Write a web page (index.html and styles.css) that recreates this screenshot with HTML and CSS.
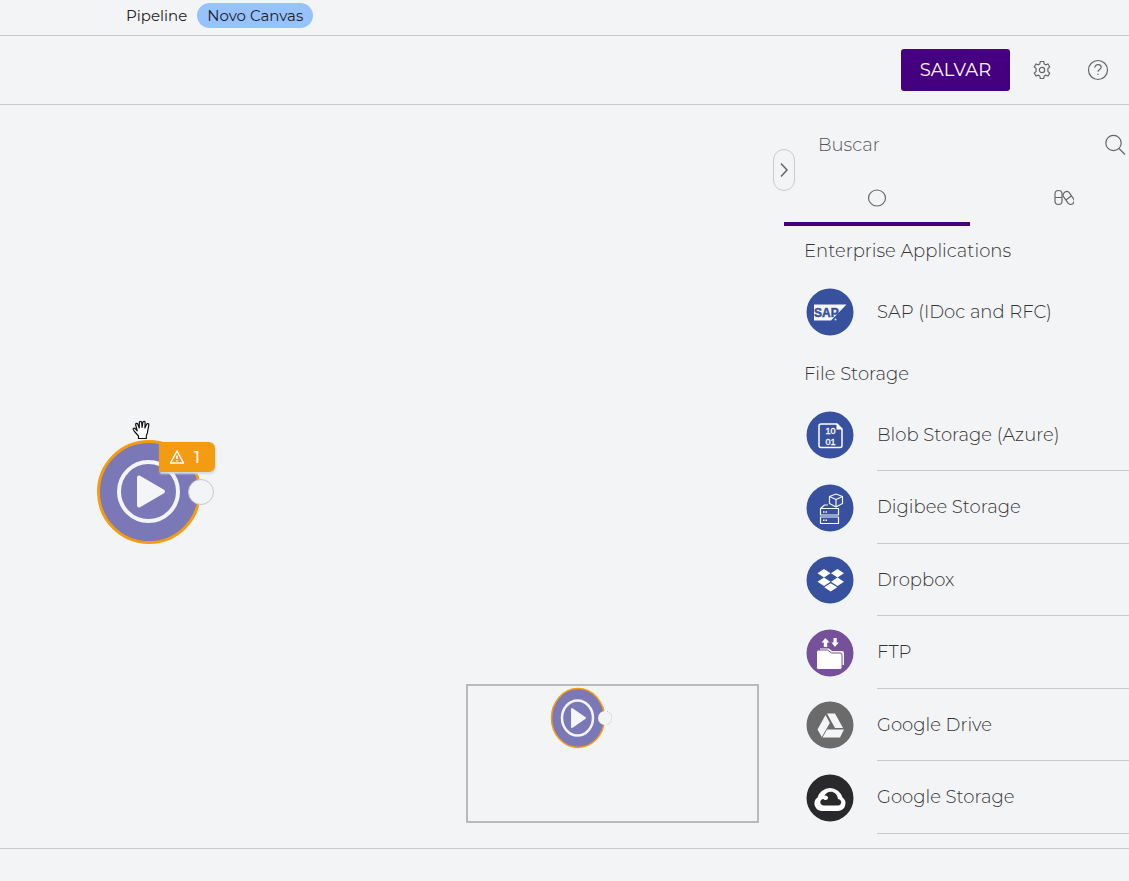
FILE: index.html
```html
<!DOCTYPE html>
<html lang="pt-BR">
<head>
<meta charset="utf-8">
<meta name="viewport" content="width=device-width, initial-scale=1">
<title>Pipeline</title>
<link rel="stylesheet" href="styles.css">
</head>
<body>
<header class="crumbs">
  <span>Pipeline</span>
  <span class="tag">Novo Canvas</span>
</header>

<div class="toolbar">
  <button class="save" type="button">SALVAR</button>
  <button class="icon-button" type="button" aria-label="Configurações">
    <svg width="20" height="20" viewBox="0 0 20 20" class="line"><path d="M8.300 1.500h3.400l.5 2.400 1.500.9 2.300-.8 1.700 2.900-1.800 1.600v3l1.800 1.600-1.700 2.900-2.300-.8-1.500.9-.5 2.400H8.300l-.5-2.400-1.500-.9-2.300.8-1.700-2.900 1.800-1.600v-3L2.300 6.900 4 4l2.300.8 1.500-.9z"/><circle cx="10" cy="10" r="2.700"/></svg>
  </button>
  <button class="icon-button" type="button" aria-label="Ajuda">
    <svg width="22" height="22" viewBox="0 0 22 22" class="line"><circle cx="11" cy="11" r="9.500"/><path d="M7.800 8.700c0-1.900 1.400-3 3.200-3s3.200 1 3.200 2.600c0 2.200-3.200 2.200-3.200 4.500M11 14.700v1.300"/></svg>
  </button>
</div>

<main class="workspace">
  <section class="canvas" aria-label="Canvas">
    <div class="node">
      <svg width="118" height="106" viewBox="0 0 118 106">
        <circle cx="53" cy="53" r="50.500" fill="#7b78b7" stroke="#f39c12" stroke-width="3"/>
        <circle cx="52.500" cy="52.500" r="29.500" fill="none" stroke="#f3f5f8" stroke-width="4"/>
        <path d="M43 38.500v28l24-14z" fill="#f3f5f8" stroke="#f3f5f8" stroke-width="4" stroke-linejoin="round"/>
        <circle cx="105" cy="53" r="12.500" fill="#f3f4f6" stroke="#c6c7c9"/>
      </svg>
      <span class="warning">
        <svg width="16" height="14" viewBox="0 0 16 14" fill="none" stroke="#fff" stroke-width="1.500" stroke-linejoin="round"><path d="M8 1l6.500 12h-13zM8 5.500v3.500M8 10.200v1.300"/></svg>
        <span>1</span>
      </span>
    </div>
    <svg class="hand" width="20" height="20" viewBox="0 0 20 20"><path d="M6.500 18.500v-2.500L2.500 11.500 1.200 9.500c-.4-1.200 1-1.700 2-.8l2 2.100L3.700 5c-.5-1.900 1.500-2.300 2.100-.7L7.300 8V2.500C7.300.9 9.500.9 9.600 2.500l.5 5 .7-5.100c.3-1.600 2.400-1.300 2.300.3L12.900 8l1.700-3.700c.7-1.400 2.500-.6 2.200.8l-1.200 6.600c-.1 1.900-1 2.300-1.300 4.300v2.500z" fill="#fff" stroke="#111" stroke-width="1.200" stroke-linejoin="round"/></svg>
    <div class="minimap">
      <svg width="62" height="62" viewBox="0 0 62 62">
        <ellipse cx="28" cy="31" rx="26.500" ry="29.500" fill="#7b78b7" stroke="#f39c12" stroke-width="1.500"/>
        <ellipse cx="27.500" cy="31" rx="15.500" ry="17.500" fill="none" stroke="#f3f5f8" stroke-width="2.500"/>
        <path d="M22 22v18l13-9z" fill="#f3f5f8" stroke="#f3f5f8" stroke-width="2" stroke-linejoin="round"/>
        <circle cx="55" cy="31" r="7" fill="#f3f4f6"/>
        <path d="M57 24.300a7 7 0 0 1 0 13.400" fill="none" stroke="#b8babc" stroke-dasharray="1 1"/>
      </svg>
    </div>
  </section>

  <aside class="sidebar">
    <button class="collapse" type="button" aria-label="Recolher painel">
      <svg width="10" height="16" viewBox="0 0 10 16" fill="none" stroke="#666" stroke-width="1.500"><path d="M2 1.500L8 8l-6 6.500"/></svg>
    </button>
    <div class="panel">
      <div class="search">
        <input type="text" placeholder="Buscar" aria-label="Buscar">
        <button class="icon-button" type="button" aria-label="Pesquisar">
          <svg width="22" height="22" viewBox="0 0 22 22" class="line"><circle cx="9.500" cy="9" r="7.700"/><path d="M15 14.500l6 6"/></svg>
        </button>
      </div>
      <div class="tabs">
        <button class="tab active" type="button" aria-label="Componentes"><svg width="22" height="18" viewBox="0 0 22 18" class="line"><ellipse cx="11" cy="9" rx="8.500" ry="8"/></svg></button>
        <button class="tab" type="button" aria-label="Cápsulas"><svg width="22" height="18" viewBox="0 0 22 18" class="line"><rect x="3" y="1.500" width="7" height="14" rx="3.500"/><path d="M3 8.500h7M13.800 11l5.500-4"/><rect x="13.200" y="2" width="7" height="14" rx="3.500" transform="rotate(-35 16.700 9)"/></svg></button>
      </div>

      <h2>Enterprise Applications</h2>
      <ul class="items single">
        <li>
          <svg class="logo" viewBox="0 0 48 48"><circle cx="24" cy="24" r="23.500" fill="#37519f"/><path d="M8 16.500h32.500L25 32.500H8z" fill="#f6f8fc"/><text class="sap" x="8" y="29">SAP</text><circle cx="29.500" cy="31.500" r="1" fill="#dfe5f4"/></svg>
          <span>SAP (IDoc and RFC)</span>
        </li>
      </ul>

      <h2>File Storage</h2>
      <ul class="items">
        <li>
          <svg class="logo" viewBox="0 0 48 48"><circle cx="24" cy="24" r="23.500" fill="#37519f"/><path d="M31 13H15a2 2 0 0 0-2 2v19.500a2 2 0 0 0 2 2h19a2 2 0 0 0 2-2V18z" fill="none" stroke="#fff" stroke-width="1.500"/><path d="M30.500 12.500l6 6h-6z" fill="#fff"/><text class="bits" x="19.500" y="23">10</text><text class="bits" x="19.500" y="33.500">01</text></svg>
          <span>Blob Storage (Azure)</span>
        </li>
        <li>
          <svg class="logo" viewBox="0 0 48 48"><circle cx="24" cy="24" r="23.500" fill="#37519f"/><g fill="none" stroke="#f4f6fb" stroke-width="1.200" stroke-linejoin="round"><path d="M30 10l6.500 2.500v7L30 23l-6.500-3.500v-7zM23.500 12.500L30 15.500l6.500-3M30 15.500V23M14.500 24.500h18v6.500h-18zM14.500 33h18v6.500h-18zM14.500 24.500l4-3.500h3.500"/><path d="M17 28h4.500M17 36.300h4.500" stroke-width="1.500" stroke-dasharray="1.500 1"/></g></svg>
          <span>Digibee Storage</span>
        </li>
        <li>
          <svg class="logo" viewBox="0 0 48 48"><circle cx="24" cy="24" r="23.500" fill="#37519f"/><path d="M18 13l6.500 4.200-6.500 4.200-6.500-4.200zM31.500 13l6.500 4.200-6.500 4.200-6.500-4.200zM18 21.500l6.500 4.200-6.500 4.200-6.500-4.200zM31.500 21.500l6.500 4.200-6.500 4.200-6.500-4.200zM24.700 27.200l6.500 4.100-6.500 4.200-6.500-4.200z" fill="#fff"/></svg>
          <span>Dropbox</span>
        </li>
        <li>
          <svg class="logo" viewBox="0 0 48 48"><circle cx="24" cy="24" r="23.500" fill="#75509b"/><path d="M14 22v-2.500h9l3 2.500h10a2 2 0 0 1 2 2v12h-2" fill="#f7f4fa"/><path d="M10.500 23a2 2 0 0 1 2-2h9l4 3h8.500a2 2 0 0 1 2 2v12.500a2 2 0 0 1-2 2H12.500a2 2 0 0 1-2-2z" fill="#fff" stroke="#75509b"/><path d="M19.500 9l4 4.500h-2.300V18h-3.400v-4.500h-2.300zM29 18l-3.500-4.500h2V9h3.200v4.500h2z" fill="#fff"/></svg>
          <span>FTP</span>
        </li>
        <li>
          <svg class="logo" viewBox="0 0 48 48"><circle cx="24" cy="24" r="23.500" fill="#6b6b6b"/><path d="M21 12.500h8l8 14.500h-8zM19.500 14l4.300 8-8 14-4.300-7.500zM21 28.500h17L34 36.500H16.500z" fill="#f4f5f6"/></svg>
          <span>Google Drive</span>
        </li>
        <li>
          <svg class="logo" viewBox="0 0 48 48"><circle cx="24" cy="24" r="23.500" fill="#29292b"/><path d="M16.500 37a7.500 7.500 0 0 1-5-13.500A13 13 0 0 1 36.500 23.500a7.500 7.500 0 0 1-4.500 13.500z" fill="#fff"/><path d="M17.500 31.500c-4.500-.5-4-6.500 0-6.500.8 1.300 4.200 1.800 4.500-.9.200-1.900-1.500-2.900-3.500-2.600 3-6 12.500-5 13.500 3.500 4.500.5 4 6.500 0 6.500z" fill="#29292b"/></svg>
          <span>Google Storage</span>
        </li>
      </ul>
    </div>
  </aside>
</main>
<footer class="status"></footer>
</body>
</html>
```

FILE: styles.css
```css
* { box-sizing: border-box; }

body {
  margin: 0;
  min-height: 100vh;
  display: flex;
  flex-direction: column;
  background: #f3f4f6;
  color: #333;
  font-family: Montserrat, Inter, "Open Sans", sans-serif;
  font-size: 18px;
  font-weight: 300;
}

button {
  padding: 0;
  border: 0;
  background: none;
  font: inherit;
  cursor: pointer;
}

svg { display: block; flex: none; }

.line { fill: none; stroke: #666; stroke-width: 1.2; }

.crumbs {
  display: flex;
  align-items: center;
  gap: 10px;
  height: 36px;
  padding: 0 126px 5px;
  border-bottom: 1px solid #c8cacd;
  color: #222;
  font-size: 15px;
  font-weight: 400;
}

.tag {
  padding: 0 10px;
  border-radius: 13px;
  background: #96c2ff;
  line-height: 25px;
}

.toolbar {
  display: flex;
  align-items: center;
  justify-content: flex-end;
  gap: 22px;
  height: 69px;
  padding-right: 20px;
  border-bottom: 1px solid #c8cacd;
}

.save {
  width: 109px;
  height: 42px;
  border-radius: 3px;
  background: #450080;
  color: #fff;
  font-weight: 400;
}

.icon-button {
  display: flex;
  align-items: center;
  justify-content: center;
}

.toolbar .icon-button:last-child { margin-left: 13px; }

.workspace {
  flex: 1;
  display: flex;
  border-bottom: 1px solid #c8cacd;
}

.canvas {
  position: relative;
  flex: 1;
}

.node {
  position: absolute;
  left: 96px;
  top: 334px;
}

.warning {
  position: absolute;
  left: 63px;
  top: 3px;
  display: flex;
  align-items: center;
  gap: 9px;
  width: 56px;
  height: 30px;
  padding-left: 10px;
  border-radius: 1px 6px 6px 1px;
  background: #f39c12;
  box-shadow: 1px 2px 2px #d0dce5;
  color: #fff;
  font-size: 16px;
  font-weight: 500;
}

.hand {
  position: absolute;
  left: 132px;
  top: 315px;
}

.minimap {
  position: absolute;
  right: 25px;
  bottom: 25px;
  width: 293px;
  height: 139px;
  padding: 1px 82px;
  border: 2px solid #b8baba;
}

.sidebar {
  position: relative;
  width: 345px;
}

.collapse {
  position: absolute;
  left: -11px;
  top: 44px;
  display: flex;
  align-items: center;
  justify-content: center;
  width: 22px;
  height: 42px;
  border: 1px solid #c8cacd;
  border-radius: 11px;
}

.panel { overflow: hidden; }

.search {
  display: flex;
  align-items: center;
  height: 80px;
  padding: 0 3px 0 34px;
}

.search input {
  flex: 1;
  min-width: 0;
  padding: 0;
  border: 0;
  background: none;
  font: inherit;
}

.search input::placeholder { color: #555; opacity: 1; }

.tabs {
  display: grid;
  grid-template-columns: 186px 186px;
}

.tab {
  display: flex;
  justify-content: center;
  height: 41px;
  padding-top: 4px;
  border-bottom: 4px solid transparent;
}

.tab.active { border-color: #450080; }

h2 {
  margin: 0;
  padding-left: 20px;
  font-size: 18px;
  font-weight: 300;
  line-height: 50px;
}

.items {
  display: grid;
  grid-template-rows: repeat(3, 72px 73px);
  margin: 0;
  padding: 0 0 0 22px;
  list-style: none;
}

.items.single {
  grid-template-rows: 72px;
  padding-bottom: 1px;
}

.items li {
  display: flex;
  align-items: center;
  gap: 23px;
}

.items span {
  flex: 1;
  display: flex;
  align-items: center;
  height: 100%;
  border-bottom: 1px solid #c8cacd;
}

.items.single span { border: 0; }

.logo { width: 48px; height: 48px; }

.sap {
  fill: #37519f;
  stroke: #37519f;
  stroke-width: 0.5;
  font: bold 12px "Liberation Sans", sans-serif;
}

.bits {
  fill: #fff;
  stroke: #fff;
  stroke-width: 0.3;
  font: 9px "Liberation Sans", sans-serif;
}

.status { height: 32px; }
```
